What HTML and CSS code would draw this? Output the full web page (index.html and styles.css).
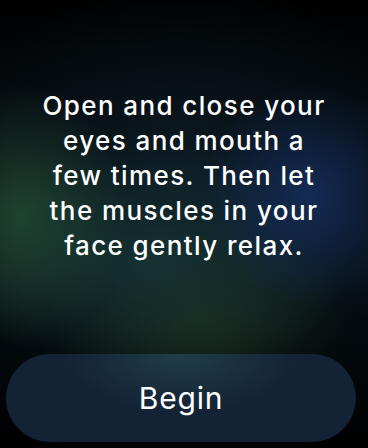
FILE: index.html
```html
<!DOCTYPE html>
<html lang="en">

<head>
    <meta charset="UTF-8">
    <meta name="viewport" content="width=device-width, initial-scale=1.0">
    <title>Mindfulness</title>
    <link rel="stylesheet" href="styles.css">
</head>

<body>
    <div class="screen">
        <div class="prompt">
            <p class="prompt-text">Open and close your<br>eyes and mouth a<br>few times. Then let<br>the muscles in your<br>face gently relax.</p>
        </div>
        <button class="begin-btn">Begin</button>
    </div>
</body>

</html>
```

FILE: styles.css
```css
html,
body {
    margin: 0;
    padding: 0;
    height: 100%;
    background-color: #000;
}

body {
    font-family: Inter, "Open Sans", sans-serif;
}

.screen {
    height: 448px;
    display: flex;
    flex-direction: column;
    box-sizing: border-box;
    padding: 0 12px 6px 6px;
    background:
        radial-gradient(ellipse 110px 130px at 20px 215px, rgba(38, 80, 52, 0.75), transparent),
        radial-gradient(ellipse 110px 110px at 310px 195px, rgba(22, 48, 100, 0.8), transparent),
        radial-gradient(ellipse 200px 120px at 150px 260px, rgba(24, 58, 58, 0.7), transparent),
        radial-gradient(ellipse 150px 100px at 200px 320px, rgba(30, 52, 30, 0.75), transparent),
        radial-gradient(ellipse 260px 200px at 180px 180px, rgba(14, 30, 40, 0.8), transparent),
        linear-gradient(#000 0%, #03070a 20%, #061016 60%, #000 100%);
}

.prompt {
    flex: 1;
    display: flex;
    align-items: center;
    justify-content: center;
    padding-left: 6px;
}

.prompt-text {
    margin: 0 0 4px 0;
    color: #fff;
    font-size: 26px;
    font-weight: 500;
    line-height: 35px;
    letter-spacing: 1.4px;
    text-align: center;
}

.begin-btn {
    height: 88px;
    border: none;
    border-radius: 44px;
    background:
        radial-gradient(ellipse 120px 60px at 50% 0%, rgba(40, 80, 85, 0.6), transparent),
        #132235;
    color: #fff;
    font-family: Inter, "Open Sans", sans-serif;
    font-size: 30px;
    font-weight: 400;
    letter-spacing: 0.8px;
    cursor: pointer;
}
```
